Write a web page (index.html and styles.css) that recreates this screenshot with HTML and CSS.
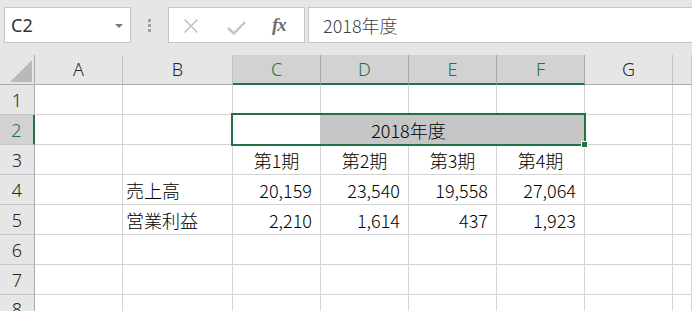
FILE: index.html
```html
<!DOCTYPE html>
<html lang="ja">

<head>
    <meta charset="UTF-8">
    <meta name="viewport" content="width=device-width, initial-scale=1.0">
    <title>Book1 - Excel</title>
    <link rel="stylesheet" href="styles.css">
</head>

<body>

    <div class="toolbar">
        <div class="name-box">
            <span class="name">C2</span>
            <span class="caret"></span>
        </div>
        <div class="grip"><i></i><i></i><i></i></div>
        <div class="fx-buttons">
            <svg class="btn-cancel" width="16" height="16" viewBox="0 0 16 16">
                <path d="M1.5 1.5 L14.5 14.5 M14.5 1.5 L1.5 14.5" stroke="#c4c4c4" stroke-width="1.7" fill="none" />
            </svg>
            <svg class="btn-enter" width="19" height="14" viewBox="0 0 19 14">
                <path d="M1 7 L7 12.5 L18 1" stroke="#c4c4c4" stroke-width="2.4" fill="none" />
            </svg>
            <span class="fx">fx</span>
        </div>
        <div class="formula">2018年度</div>
    </div>

    <div class="sheet">
        <div class="grid">
            <!-- header -->
            <div class="corner">
                <svg width="22" height="22" viewBox="0 0 22 22">
                    <polygon points="22,0 22,22 0,22" fill="#b9b9b9" />
                </svg>
            </div>
            <div class="col-head">A</div>
            <div class="col-head">B</div>
            <div class="col-head sel">C</div>
            <div class="col-head sel">D</div>
            <div class="col-head sel">E</div>
            <div class="col-head sel">F</div>
            <div class="col-head">G</div>
            <div class="col-head"></div>

            <!-- row 1 -->
            <div class="row-head">1</div>
            <div></div><div></div><div></div><div></div><div></div><div></div><div></div><div></div>

            <!-- row 2 -->
            <div class="row-head sel">2</div>
            <div></div><div></div>
            <div class="merged">2018年度</div>
            <div></div><div></div>

            <!-- row 3 -->
            <div class="row-head">3</div>
            <div></div><div></div>
            <div class="center">第1期</div>
            <div class="center">第2期</div>
            <div class="center">第3期</div>
            <div class="center">第4期</div>
            <div></div><div></div>

            <!-- row 4 -->
            <div class="row-head">4</div>
            <div></div>
            <div>売上高</div>
            <div class="num">20,159</div>
            <div class="num">23,540</div>
            <div class="num">19,558</div>
            <div class="num">27,064</div>
            <div></div><div></div>

            <!-- row 5 -->
            <div class="row-head">5</div>
            <div></div>
            <div>営業利益</div>
            <div class="num">2,210</div>
            <div class="num">1,614</div>
            <div class="num">437</div>
            <div class="num">1,923</div>
            <div></div><div></div>

            <div class="row-head">6</div>
            <div></div><div></div><div></div><div></div><div></div><div></div><div></div><div></div>

            <div class="row-head">7</div>
            <div></div><div></div><div></div><div></div><div></div><div></div><div></div><div></div>

            <div class="row-head last">8</div>
            <div></div><div></div><div></div><div></div><div></div><div></div><div></div><div></div>
        </div>

        <!-- selected range C2:F2 -->
        <div class="selection">
            <div class="handle"></div>
        </div>
    </div>

</body>

</html>
```

FILE: styles.css
```css
body {
    margin: 0;
    width: 692px;
    height: 311px;
    overflow: hidden;
    background-color: #ffffff;
    font-family: "Noto Sans CJK JP", sans-serif;
}

/* formula bar area */
.toolbar {
    height: 55px;
    box-sizing: border-box;
    padding: 7px 0 0 4px;
    background-color: #e6e6e6;
    display: flex;
    align-items: flex-start;
}

.name-box {
    width: 127px;
    height: 36px;
    box-sizing: border-box;
    border: 1px solid #c6c6c6;
    background-color: #ffffff;
    display: flex;
    align-items: center;
    justify-content: space-between;
    padding: 0 7px 0 6px;
}

.name {
    font-family: "Noto Sans", sans-serif;
    font-size: 18px;
    color: #333333;
}

.caret {
    width: 0;
    height: 0;
    border-left: 4px solid transparent;
    border-right: 4px solid transparent;
    border-top: 4px solid #7a7a7a;
    margin-top: 2px;
}

.grip {
    margin-left: 17px;
    margin-top: 12px;
    width: 3px;
    display: flex;
    flex-direction: column;
    gap: 2px;
}

.grip i {
    width: 3px;
    height: 3px;
    background-color: #a0a0a0;
}

.fx-buttons {
    margin-left: 17px;
    width: 137px;
    height: 36px;
    box-sizing: border-box;
    border: 1px solid #c6c6c6;
    background-color: #ffffff;
    display: flex;
    align-items: center;
    padding-left: 14px;
}

.btn-cancel {
    margin-top: 2px;
}

.btn-enter {
    margin-left: 28px;
    margin-top: 5px;
}

.fx {
    margin-left: 26px;
    font-family: "Liberation Serif", serif;
    font-style: italic;
    font-weight: bold;
    font-size: 19px;
    color: #6e6e6e;
    letter-spacing: -1px;
}

.formula {
    flex: 1;
    margin-left: 3px;
    margin-right: -2px;
    height: 36px;
    box-sizing: border-box;
    border: 1px solid #c6c6c6;
    background-color: #ffffff;
    padding-left: 14px;
    display: flex;
    align-items: center;
    font-size: 18px;
    font-weight: 300;
    color: #444444;
}

/* worksheet */
.sheet {
    position: relative;
}

.grid {
    display: grid;
    grid-template-columns: 35px 88px 110px 88px 88px 88px 88px 88px 1fr;
    grid-auto-rows: 30px;
}

.grid > div {
    box-sizing: border-box;
    border-right: 1px solid #d4d4d4;
    border-bottom: 1px solid #d4d4d4;
    display: flex;
    align-items: center;
    padding: 0 3px;
    font-size: 18px;
    font-weight: 300;
    color: #000000;
    white-space: nowrap;
    overflow: hidden;
}

.grid > .corner {
    background-color: #e6e6e6;
    border-right-color: #ababab;
    border-bottom-color: #ababab;
    justify-content: flex-end;
    align-items: flex-end;
    padding: 0 2px 2px 0;
}

.grid > .col-head {
    background-color: #e6e6e6;
    border-right-color: #c2c2c2;
    border-bottom-color: #ababab;
    justify-content: center;
    font-family: "Noto Sans", sans-serif;
    font-size: 18px;
    color: #262626;
    padding-bottom: 1px;
}

.grid > .col-head.sel {
    background-color: #d2d2d2;
    color: #217346;
    border-right-color: #ababab;
    border-bottom: 2px solid #217346;
}

.grid > .row-head {
    background-color: #e6e6e6;
    border-right-color: #ababab;
    border-bottom-color: #c6c6c6;
    justify-content: center;
    font-family: "Noto Sans", sans-serif;
    font-size: 18px;
    color: #262626;
}

/* last row is only partly visible */
.grid > .row-head.last {
    align-items: flex-start;
    padding-top: 2px;
}

.grid > .row-head.sel {
    background-color: #d2d2d2;
    color: #217346;
    border-right: 2px solid #217346;
}

.grid > .center {
    justify-content: center;
}

.grid > .num {
    justify-content: flex-end;
    padding-right: 8px;
}

.grid > .merged {
    grid-column: span 4;
    justify-content: center;
    background: linear-gradient(to right, #ffffff 87px, #c6c6c6 87px);
}

.selection {
    position: absolute;
    left: 231px;
    top: 58px;
    width: 355px;
    height: 33px;
    box-sizing: border-box;
    border: 2px solid #217346;
    pointer-events: none;
}

.handle {
    position: absolute;
    right: -4px;
    bottom: -4px;
    width: 7px;
    height: 7px;
    box-sizing: border-box;
    background-color: #217346;
    border: 1px solid #ffffff;
}
```
